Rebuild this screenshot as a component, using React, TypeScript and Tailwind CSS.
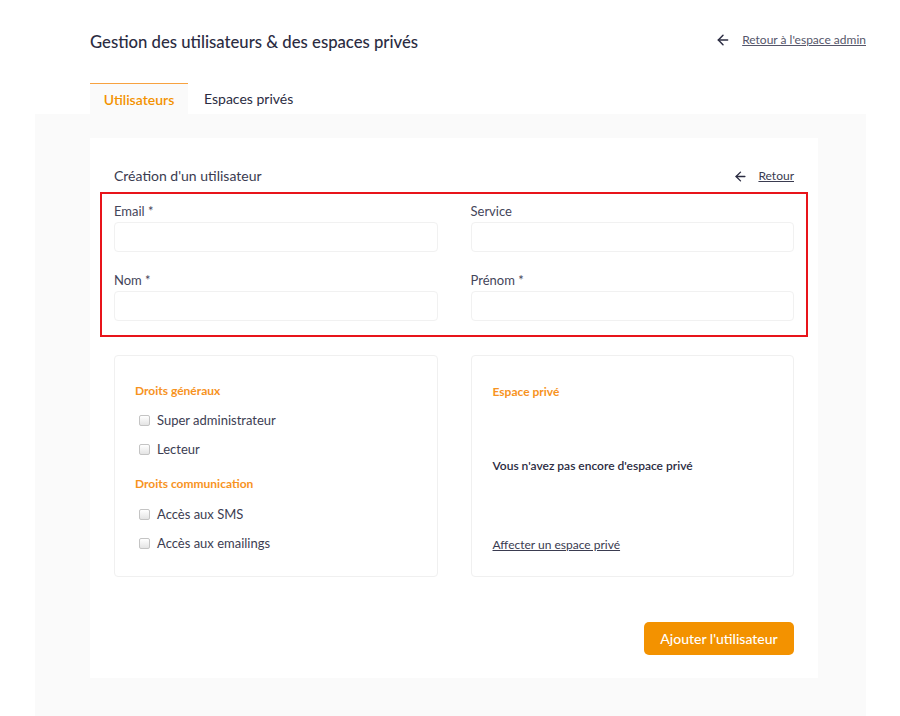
import { ArrowLeft } from "lucide-react";

function Field({ label }: { label: string }) {
  return (
    <div className="flex flex-col">
      <label className="text-[13px] leading-[18px] text-[#44455a] h-[18px]">{label}</label>
      <input className="mt-[2px] h-[30px] rounded-[4px] border border-[#f1f1f1] bg-white px-2 text-[13px] outline-none" />
    </div>
  );
}

function Check({ label }: { label: string }) {
  return (
    <label className="flex items-center gap-[7px] h-[29px] ml-[4px]">
      <span className="w-[11px] h-[11px] rounded-[2px] border border-[#c4c4c4] bg-gradient-to-b from-white to-[#e4e4e4]" />
      <span className="text-[13px] text-[#3c3d52]">{label}</span>
    </label>
  );
}

export default function App() {
  return (
    <div className="min-h-[716px] bg-white text-[#2b2c42]" style={{ fontFamily: "Lato, 'Noto Sans', sans-serif" }}>
      {/* Header */}
      <div className="ml-[90px] w-[776px] pt-[30px] flex items-start justify-between">
        <h1 className="text-[16.7px] leading-[24px] font-medium text-[#2b2c42]">
          Gestion des utilisateurs &amp; des espaces privés
        </h1>
        <a href="#" className="flex items-center gap-[11px] mt-[1px] text-[12px] text-[#55566a] underline">
          <ArrowLeft className="w-[16px] h-[16px] text-[#2b2c42]" strokeWidth={2.2} />
          Retour à l'espace admin
        </a>
      </div>

      {/* Tabs */}
      <div className="ml-[90px] mt-[29px] flex items-end">
        <div className="w-[98px] h-[31px] border-t border-[#f7a240] bg-[#fafafa] flex items-center justify-center text-[14px] font-semibold text-[#f39200]">
          Utilisateurs
        </div>
        <div className="h-[31px] px-[16px] flex items-center text-[14px] text-[#2b2c42]">Espaces privés</div>
      </div>

      {/* Panel */}
      <div className="ml-[35px] w-[831px] bg-[#fafafa] pl-[55px] pr-[48px] pt-[24px] pb-[38px]">
        <div className="w-[728px] h-[540px] bg-white px-[24px] pt-[29px]">
          <div className="flex items-center justify-between">
            <h2 className="text-[14px] leading-[18px] text-[#3a3b50]">Création d'un utilisateur</h2>
            <a href="#" className="flex items-center gap-[10px] text-[12px] text-[#3a3b50] underline">
              <ArrowLeft className="w-[15px] h-[15px] text-[#2b2c42]" strokeWidth={2.2} />
              Retour
            </a>
          </div>

          {/* Red highlight */}
          <div className="mt-[7px] -mx-[14px] border-2 border-[#e8141a] px-[12px] pt-[8px] pb-[14px]">
            <div className="grid grid-cols-2 gap-x-[33px] gap-y-[19px]">
              <Field label="Email *" />
              <Field label="Service" />
              <Field label="Nom *" />
              <Field label="Prénom *" />
            </div>
          </div>

          <div className="mt-[18px] grid grid-cols-2 gap-x-[33px]">
            <div className="h-[222px] rounded-[4px] border border-[#f0f0f0] px-[20px] pt-[27px]">
              <div className="text-[12px] font-bold text-[#f7931e] leading-[16px]">Droits généraux</div>
              <div className="mt-[7px]">
                <Check label="Super administrateur" />
                <Check label="Lecteur" />
              </div>
              <div className="mt-[12px] text-[12px] font-bold text-[#f7931e] leading-[16px]">Droits communication</div>
              <div className="mt-[8px]">
                <Check label="Accès aux SMS" />
                <Check label="Accès aux emailings" />
              </div>
            </div>
            <div className="h-[222px] rounded-[4px] border border-[#f0f0f0] px-[21px] pt-[28px] flex flex-col">
              <div className="text-[12px] font-bold text-[#f7931e] leading-[16px]">Espace privé</div>
              <div className="mt-[58px] text-[12px] font-semibold text-[#2b2c42] leading-[16px]">
                Vous n'avez pas encore d'espace privé
              </div>
              <a href="#" className="mt-[63px] text-[12px] text-[#3a3b50] underline leading-[16px]">
                Affecter un espace privé
              </a>
            </div>
          </div>

          <div className="mt-[45px] flex justify-end">
            <button className="w-[150px] h-[33px] rounded-[5px] bg-[#f39200] text-white text-[14px] font-medium">
              Ajouter l'utilisateur
            </button>
          </div>
        </div>
      </div>
    </div>
  );
}
